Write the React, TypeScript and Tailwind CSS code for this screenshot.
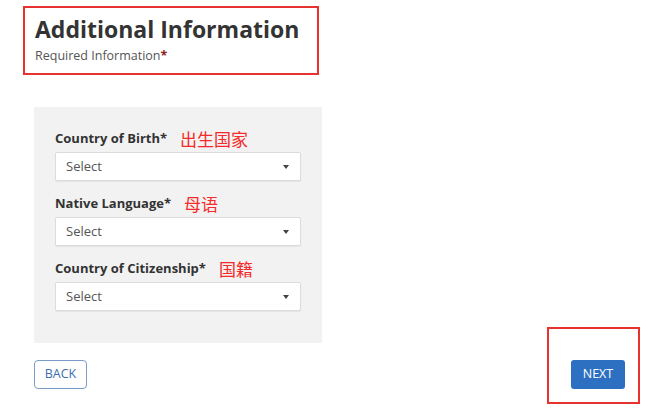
import React from "react";

const fields = [
  { label: "Country of Birth", note: "出生国家" },
  { label: "Native Language", note: "母语" },
  { label: "Country of Citizenship", note: "国籍" },
];

function SelectBox() {
  return (
    <div className="flex h-[29px] w-[246px] items-center justify-between rounded-[2px] border border-[#dcdcdc] bg-white pl-[10px] pr-[11px] shadow-[0_1px_1px_rgba(0,0,0,0.06)]">
      <span className="text-[13px] text-[#555]">Select</span>
      <span className="h-0 w-0 border-x-[3.5px] border-t-[4px] border-x-transparent border-t-[#444]" />
    </div>
  );
}

export default function App() {
  return (
    <div className="relative h-[416px] w-[657px] bg-white font-['Open_Sans','Noto_Sans_CJK_SC',sans-serif]">
      {/* Header */}
      <div className="ml-[23px] mt-[6px] h-[69px] w-[296px] border-2 border-[#e8322f] pl-[10px] pt-[6px]">
        <h1 className="text-[23px] font-bold leading-[30px] text-[#333]">Additional Information</h1>
        <p className="mt-[4px] text-[12.5px] leading-[16px] text-[#555]">
          Required Information<span className="font-bold text-[#8b1c1c]">*</span>
        </p>
      </div>

      {/* Form panel */}
      <div className="ml-[34px] mt-[32px] h-[236px] w-[288px] bg-[#f2f2f2] pl-[21px] pt-[21px]">
        {fields.map((f) => (
          <div key={f.label} className="mb-[12px]">
            <div className="mb-[2px] flex h-[22px] items-center">
              <span className="text-[13px] font-bold text-[#333]">{f.label}*</span>
              <span className="ml-[13px] font-['Noto_Sans_CJK_SC',sans-serif] text-[17px] text-[#f52b2b]">{f.note}</span>
            </div>
            <SelectBox />
          </div>
        ))}
      </div>

      {/* Buttons */}
      <div className="mt-[17px] flex items-start justify-between pl-[34px] pr-[17px]">
        <button className="h-[29px] w-[53px] rounded-[4px] border border-[#7a9cc9] bg-white text-[12.5px] text-[#3b6eab]">
          BACK
        </button>
        <div className="-mt-[33px] flex h-[77px] w-[93px] items-start border-2 border-[#e8322f] pl-[22px] pt-[31px]">
          <button className="h-[29px] w-[54px] rounded-[3px] bg-[#2d6fc0] text-[12.5px] text-white">
            NEXT
          </button>
        </div>
      </div>
    </div>
  );
}
